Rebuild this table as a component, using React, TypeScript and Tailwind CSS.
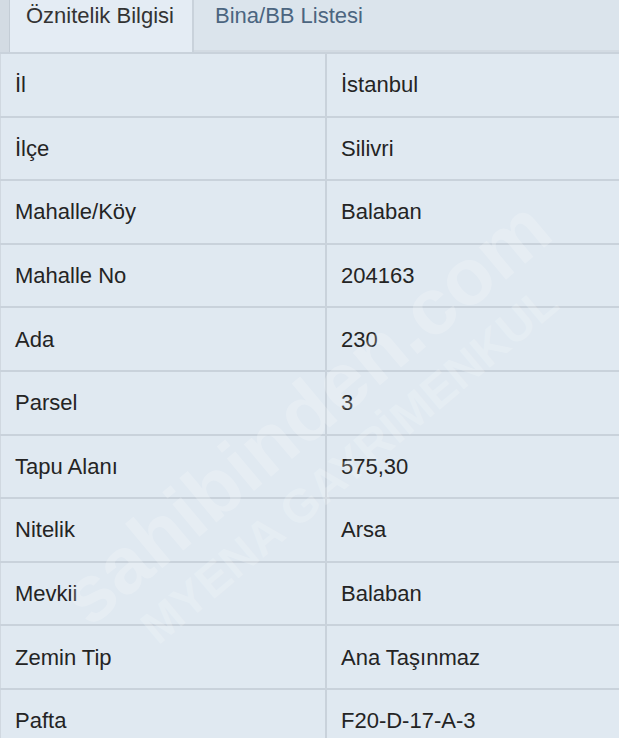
const rows: [string, string][] = [
  ["İl", "İstanbul"],
  ["İlçe", "Silivri"],
  ["Mahalle/Köy", "Balaban"],
  ["Mahalle No", "204163"],
  ["Ada", "230"],
  ["Parsel", "3"],
  ["Tapu Alanı", "575,30"],
  ["Nitelik", "Arsa"],
  ["Mevkii", "Balaban"],
  ["Zemin Tip", "Ana Taşınmaz"],
  ["Pafta", "F20-D-17-A-3"],
];

export default function App() {
  return (
    <div className="relative w-[619px] h-[738px] overflow-hidden bg-[#e0e9f1] text-[#242424] font-['Liberation_Sans',Arial,sans-serif]">
      {/* tabs */}
      <div className="flex h-[52px] bg-[#dae3eb]">
        <div className="w-[10px] bg-[#d3dbe3] border-r border-[#c3ccd5]" />
        <div className="w-[184px] bg-[#e4ecf4] border-r-2 border-[#c9d2db] pl-[16px] pt-[3px] text-[22px] leading-[26px] text-[#333]">
          Öznitelik Bilgisi
        </div>
        <div className="flex-1 flex flex-col">
          <div className="flex-1 pl-[21px] pt-[3px] text-[22px] leading-[26px] text-[#4b6580] bg-[#dbe4ec]">
            Bina/BB Listesi
          </div>
          <div className="h-[2px] bg-[#d3dbe3]" />
        </div>
      </div>

      {/* table */}
      <div className="flex flex-col">
        {rows.map(([label, value]) => (
          <div
            key={label}
            className="grid grid-cols-[327px_1fr] h-[63.6px] shrink-0 border-t-2 border-[#c9d2db] text-[22px]"
          >
            <div className="flex items-center pl-[14px] border-r-2 border-[#c9d2db] border-l border-l-[#d0d8e0]">
              {label}
            </div>
            <div className="flex items-center pl-[14px]">{value}</div>
          </div>
        ))}
      </div>

      {/* watermark */}
      <div className="absolute left-[322px] top-[432px] -translate-x-1/2 -translate-y-1/2 -rotate-[40deg] flex flex-col items-center pointer-events-none select-none">
        <div className="text-[80px] font-bold leading-none text-white/20 whitespace-nowrap">
          sahibinden.com
        </div>
        <div className="text-[47px] font-bold leading-none text-white/20 whitespace-nowrap mt-[4px]">
          MYENA GAYRİMENKUL
        </div>
      </div>
    </div>
  );
}
